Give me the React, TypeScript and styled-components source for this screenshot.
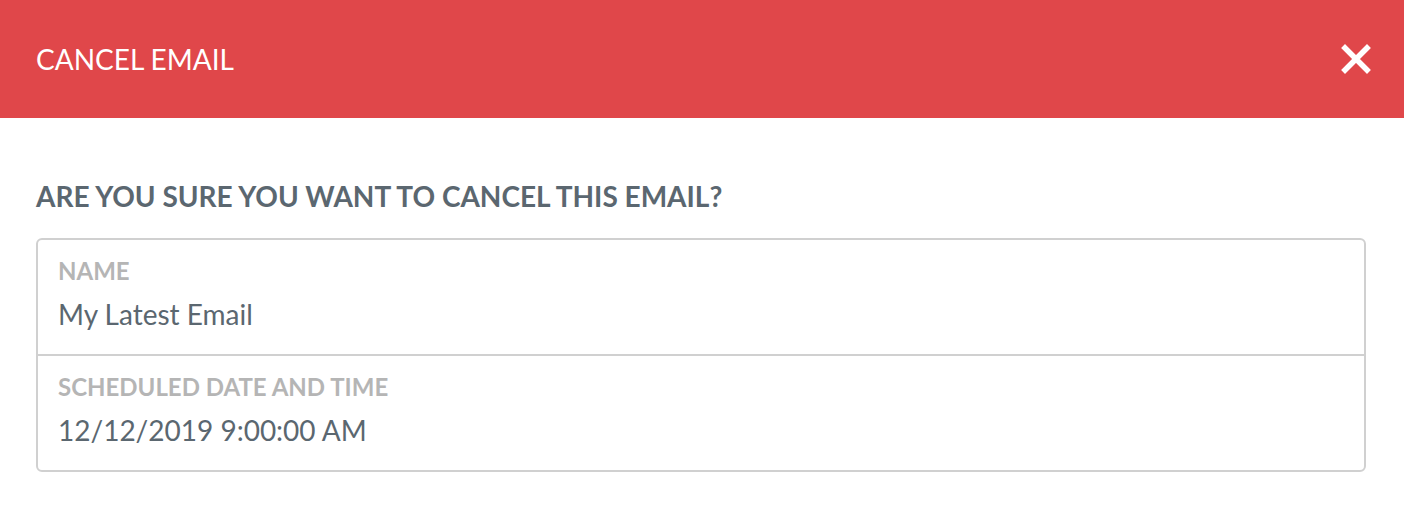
import styled, { createGlobalStyle } from "styled-components";

const GlobalStyle = createGlobalStyle`
  body {
    margin: 0;
    background: #ffffff;
    font-family: Lato, "Open Sans", sans-serif;
  }
`;

const Modal = styled.div`
  width: 1404px;
  height: 506px;
  background: #ffffff;
`;

const Header = styled.header`
  display: flex;
  align-items: center;
  justify-content: space-between;
  height: 118px;
  padding: 0 30px 0 36px;
  box-sizing: border-box;
  background: #e0474a;
`;

const Title = styled.h1`
  margin: 0;
  font-size: 28px;
  font-weight: 400;
  color: #ffffff;
  line-height: 34px;
`;

const CloseButton = styled.button`
  display: flex;
  align-items: center;
  justify-content: center;
  width: 36px;
  height: 36px;
  padding: 0;
  border: none;
  background: transparent;
  cursor: pointer;
`;

const Body = styled.div`
  padding: 61px 38px 0 36px;
`;

const Question = styled.h2`
  margin: 0 0 25px;
  font-size: 28px;
  font-weight: 700;
  color: #5b6770;
  line-height: 34px;
`;

const Details = styled.div`
  border: 2px solid #d0d0d0;
  border-radius: 6px;
`;

const Row = styled.div`
  box-sizing: border-box;
  height: 114px;
  padding: 17px 20px 0 20px;
  & + & {
    height: 116px;
    border-top: 2px solid #d0d0d0;
  }
`;

const Label = styled.div`
  font-size: 24px;
  font-weight: 700;
  color: #b5b5b5;
  line-height: 28px;
`;

const Value = styled.div`
  margin-top: 12px;
  font-size: 28px;
  font-weight: 400;
  color: #5b6770;
  line-height: 34px;
`;

const rows = [
  { label: "NAME", value: "My Latest Email" },
  { label: "SCHEDULED DATE AND TIME", value: "12/12/2019 9:00:00 AM" },
];

export default function App() {
  return (
    <>
      <GlobalStyle />
      <Modal>
        <Header>
          <Title>CANCEL EMAIL</Title>
          <CloseButton aria-label="Close">
            <svg width="30" height="30" viewBox="0 0 30 30">
              <path
                d="M4 4 L26 26 M26 4 L4 26"
                stroke="#ffffff"
                strokeWidth="5.5"
                strokeLinecap="square"
              />
            </svg>
          </CloseButton>
        </Header>
        <Body>
          <Question>ARE YOU SURE YOU WANT TO CANCEL THIS EMAIL?</Question>
          <Details>
            {rows.map((r) => (
              <Row key={r.label}>
                <Label>{r.label}</Label>
                <Value>{r.value}</Value>
              </Row>
            ))}
          </Details>
        </Body>
      </Modal>
    </>
  );
}
